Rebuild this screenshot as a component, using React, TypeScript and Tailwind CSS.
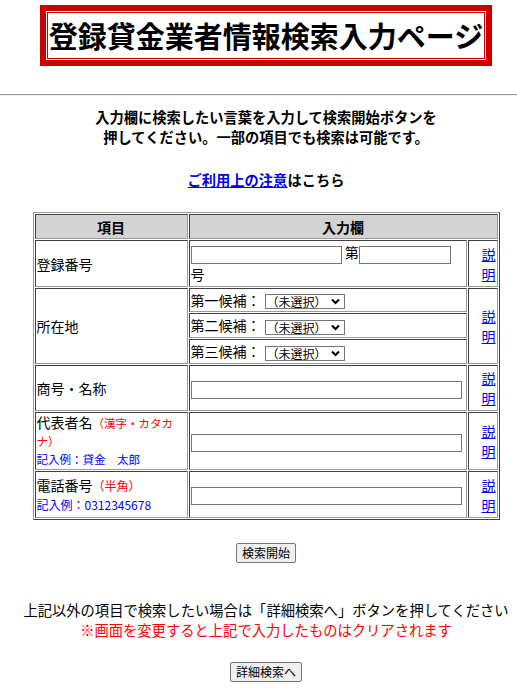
import React from "react";

// cell borders look like the old table border="1" (inset cells, outset table)
const cell = "border border-t-[#404040] border-l-[#404040] border-b-[#9a9a9a] border-r-[#9a9a9a] p-px align-middle";
const link = "text-[#0000ee] underline";
const textInput = "h-[18px] border border-[#767676] bg-white align-middle";

const Chevron = () => (
    <svg className="pointer-events-none absolute right-[5px] top-[4px]" width="9" height="7" viewBox="0 0 9 7">
        <polyline points="1,1.5 4.5,5 8,1.5" fill="none" stroke="#000" strokeWidth="2" />
    </svg>
);

const Candidate = ({ label, h }: { label: string, h: string }) => (
    <td className={cell + " " + h + " whitespace-nowrap leading-[19px]"}>
        {label}
        <span className="relative ml-[4px] inline-block align-middle leading-[13px]">
            <select className="block h-[15px] w-[80px] appearance-none border border-[#767676] bg-white pl-px text-[12px] leading-[13px]" defaultValue="">
                <option value="">（未選択）</option>
            </select>
            <Chevron />
        </span>
    </td>
);

const Setsumei = ({ rows }: { rows?: number }) => (
    <td rowSpan={rows} className={cell + " text-right leading-[20px]"}>
        <a href="#" className={link}>説明</a>
    </td>
);

export default function App() {
    return (
        <div className="min-h-[689px] bg-white pt-[5px] text-[14px] leading-[normal] text-black [font-family:'Noto_Sans_CJK_JP','Noto_Sans',sans-serif]">
            <div className="pl-[15px]">
                <div className="mx-auto w-[452px] border-[6px] border-[#cc0000] p-px">
                    <h1 className="border border-[#cc0000] text-center text-[29px] font-bold leading-[45px]">
                        登録貸金業者情報検索入力ページ
                    </h1>
                </div>
            </div>

            <hr className="mt-[28px] border-t border-b border-t-[#9a9a9a] border-b-[#eeeeee]" />

            <div className="pl-[15px]">
                <p className="mt-[11px] text-center text-[14.25px] font-bold leading-[20px]">
                    入力欄に検索したい言葉を入力して検索開始ボタンを<br />
                    押してください。一部の項目でも検索は可能です。
                </p>
                <p className="mt-[23px] text-center text-[14.25px] font-bold leading-[20px]">
                    <a href="#" className={link}>ご利用上の注意</a>はこちら
                </p>

                <table className="mx-auto mt-[22px] w-[467px] table-fixed border-separate border-spacing-px border border-t-[#9a9a9a] border-l-[#9a9a9a] border-b-[#404040] border-r-[#404040] leading-[20px]">
                    <colgroup>
                        <col className="w-[153px]" />
                        <col className="w-[278px]" />
                        <col className="w-[30px]" />
                    </colgroup>
                    <tbody>
                        <tr>
                            <th className={cell + " h-[25px] bg-[#d3d3d3] text-center font-bold"}>項目</th>
                            <th colSpan={2} className={cell + " bg-[#d3d3d3] text-center font-bold"}>入力欄</th>
                        </tr>
                        <tr>
                            <td className={cell + " h-[47px]"}>登録番号</td>
                            <td className={cell + " leading-[21px]"}>
                                <input type="text" className={textInput + " w-[151px]"} /> 第<input type="text" className={textInput + " w-[92px]"} /><br />
                                号
                            </td>
                            <Setsumei />
                        </tr>
                        <tr>
                            <td rowSpan={3} className={cell}>所在地</td>
                            <Candidate label="第一候補：" h="h-[24px]" />
                            <Setsumei rows={3} />
                        </tr>
                        <tr>
                            <Candidate label="第二候補：" h="h-[25px]" />
                        </tr>
                        <tr>
                            <Candidate label="第三候補：" h="h-[25px]" />
                        </tr>
                        <tr>
                            <td className={cell + " h-[46px]"}>商号・名称</td>
                            <td className={cell}>
                                <input type="text" className={textInput + " w-[271px]"} />
                            </td>
                            <Setsumei />
                        </tr>
                        <tr>
                            <td className={cell + " h-[57px] leading-[17px]"}>
                                代表者名<span className="text-[11.5px] text-[#ff0000]">（漢字・カタカナ）</span><br />
                                <span className="text-[11.5px] leading-[18px] text-[#0000ff]">記入例：貸金　太郎</span>
                            </td>
                            <td className={cell}>
                                <input type="text" className={textInput + " w-[271px]"} />
                            </td>
                            <Setsumei />
                        </tr>
                        <tr>
                            <td className={cell + " h-[47px] leading-[19px]"}>
                                電話番号<span className="text-[12px] text-[#ff0000]">（半角）</span><br />
                                <span className="text-[12px] text-[#0000ff]">記入例：0312345678</span>
                            </td>
                            <td className={cell}>
                                <input type="text" className={textInput + " w-[271px]"} />
                            </td>
                            <Setsumei />
                        </tr>
                    </tbody>
                </table>

                <div className="mt-[22px] text-center">
                    <button className="h-[20px] rounded-[2px] border border-[#767676] bg-[#efefef] px-[5px] text-[12px] leading-[18px]">検索開始</button>
                </div>

                <p className="mt-[37px] text-center text-[14.3px] leading-[20px]">
                    上記以外の項目で検索したい場合は「詳細検索へ」ボタンを押してください<br />
                    <span className="text-[#ff0000]">※画面を変更すると上記で入力したものはクリアされます</span>
                </p>

                <div className="mt-[21px] text-center">
                    <button className="h-[20px] rounded-[2px] border border-[#767676] bg-[#efefef] px-[5px] text-[12px] leading-[18px]">詳細検索へ</button>
                </div>
            </div>
        </div>
    );
}
